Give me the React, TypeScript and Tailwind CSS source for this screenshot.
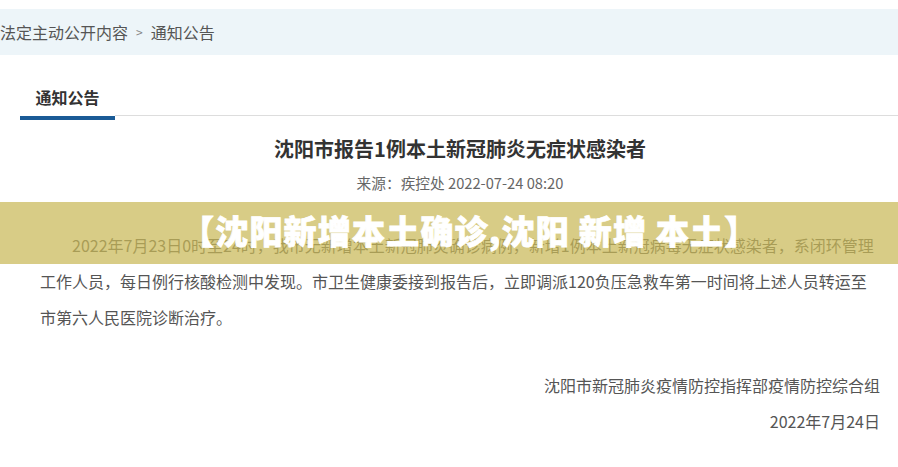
import React from "react";

const cjk = { fontFamily: '"Noto Sans CJK SC", "Noto Sans", sans-serif' };

export default function App() {
  return (
    <div className="relative w-[898px] h-[467px] overflow-hidden bg-white pt-[9px]" style={cjk}>
      {/* breadcrumb */}
      <div className="h-[46px] bg-[#edf5f9] flex items-center text-[16px] text-[#555] leading-none">
        <span>法定主动公开内容</span>
        <span className="mx-[8px] text-[12px] text-[#888]">&gt;</span>
        <span>通知公告</span>
      </div>

      {/* tab row */}
      <div className="ml-[20px] flex items-end h-[65px]">
        <div className="w-[95px] h-full border-b-4 border-[#1a5b96] flex items-end justify-center pb-[7px]">
          <span className="text-[16px] leading-[24px] font-bold text-[#333]">通知公告</span>
        </div>
        <div className="flex-1 h-[5px] border-t border-[#dddddd]" />
      </div>

      {/* article */}
      <div className="pl-[40px] pr-[18px]">
        <h1 className="mt-[14px] text-center text-[20px] leading-[30px] font-bold text-[#333]">
          沈阳市报告1例本土新冠肺炎无症状感染者
        </h1>
        <div className="mt-[9px] text-center text-[14.7px] leading-[20px] text-[#666]">
          来源：疾控处 2022-07-24 08:20
        </div>
        <p className="mt-[34px] text-[16px] leading-[36px] text-[#555] indent-[32px]">
          2022年7月23日0时至24时，我市无新增本土新冠肺炎确诊病例，新增1例本土新冠病毒无症状感染者，系闭环管理工作人员，每日例行核酸检测中发现。市卫生健康委接到报告后，立即调派120负压急救车第一时间将上述人员转运至市第六人民医院诊断治疗。
        </p>
        <div className="mt-[32px] text-right text-[16px] leading-[36px] text-[#555]">
          <div>沈阳市新冠肺炎疫情防控指挥部疫情防控综合组</div>
          <div>2022年7月24日</div>
        </div>
      </div>

      {/* overlay banner */}
      <div className="absolute left-0 right-0 top-[202px] h-[62px] bg-[rgba(201,184,87,0.72)] flex items-center pl-[181px] pb-[5px]">
        <span className="text-white text-[33px] font-black leading-none whitespace-pre tracking-[1.2px] [-webkit-text-stroke:0.8px_white]">
          【沈阳新增本土确诊,沈阳 新增 本土】
        </span>
      </div>
    </div>
  );
}
